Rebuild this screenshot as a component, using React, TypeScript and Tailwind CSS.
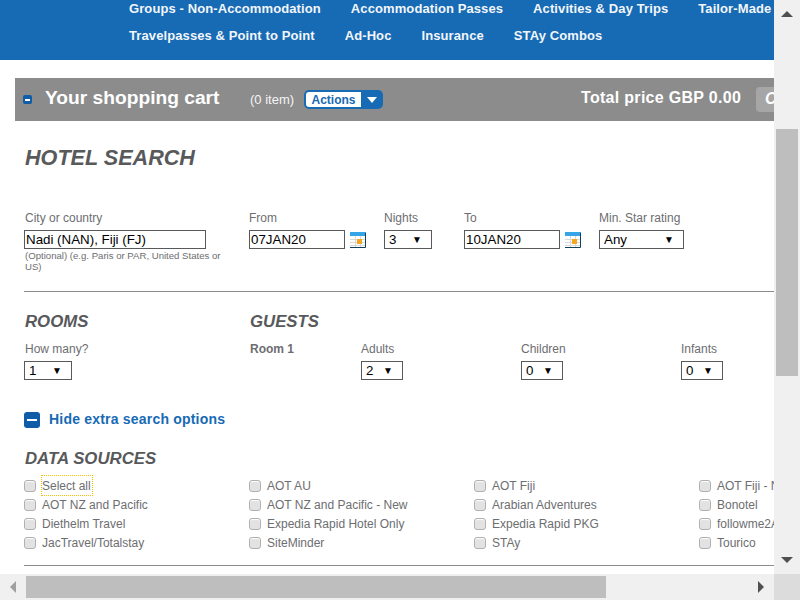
import React from 'react';

const navRows = [
  ['Groups - Non-Accommodation', 'Accommodation Passes', 'Activities & Day Trips', 'Tailor-Made'],
  ['Travelpasses & Point to Point', 'Ad-Hoc', 'Insurance', 'STAy Combos'],
];

const sources = [
  ['Select all', 'AOT AU', 'AOT Fiji', 'AOT Fiji - New'],
  ['AOT NZ and Pacific', 'AOT NZ and Pacific - New', 'Arabian Adventures', 'Bonotel'],
  ['Diethelm Travel', 'Expedia Rapid Hotel Only', 'Expedia Rapid PKG', 'followme2AFRICA'],
  ['JacTravel/Totalstay', 'SiteMinder', 'STAy', 'Tourico'],
];

function CalendarIcon() {
  return (
    <svg width="16" height="16" viewBox="0 0 16 16" className="shrink-0">
      <rect x="0" y="0" width="16" height="16" fill="#fff" />
      <rect x="0" y="0" width="16" height="4" fill="#35a5e8" />
      <path d="M0 7.5H15M0 10.5H15M0 13.5H15M5.5 4V15M10.5 4V15" stroke="#d9d9d9" strokeWidth="1" />
      <rect x="7" y="7" width="5" height="5" fill="#f5a623" />
      <path d="M15.5 1V15.5H0" fill="none" stroke="#123f5c" strokeWidth="1" />
    </svg>
  );
}

function Label({ children }: { children: React.ReactNode }) {
  return <div className="h-[19px] text-xs leading-[14px] text-[#6d6e71]">{children}</div>;
}

function TextBox({ value, width }: { value: string; width: string }) {
  return (
    <div className={`${width} flex h-[19px] items-center border border-[#58595b] pl-[1px] text-[13.33px] text-black`}>
      {value}
    </div>
  );
}

function Select({ value, width }: { value: string; width: string }) {
  return (
    <div className={`${width} flex h-[19px] items-center justify-between border border-[#58595b] pl-[4px] pr-[9px] text-[13.33px] text-black`}>
      <span>{value}</span>
      <span className="text-[10px]">▼</span>
    </div>
  );
}

function SourceCheck({ label, focused }: { label: string; focused?: boolean }) {
  return (
    <div className="flex h-[19px] w-[225px] shrink-0 items-center whitespace-nowrap">
      <span className="ml-[-1px] h-3 w-3 shrink-0 rounded-[3px] border border-[#b0b0b0] bg-[#e2e2e2] shadow-[inset_0_1px_1px_#fff]" />
      <span className={`ml-[6px] flex h-[19px] items-center pr-px text-xs text-[#6d6e71] ${focused ? 'outline-1 outline-dotted outline-[#f5c000]' : ''}`}>
        {label}
      </span>
    </div>
  );
}

export default function App() {
  return (
    <div className="flex h-[600px] w-[800px] flex-col overflow-hidden bg-white font-['Liberation_Sans',Arial,sans-serif]">
      <div className="flex h-[574px]">
        <main className="w-[774px] shrink-0 overflow-hidden">
          <header className="h-[60px] whitespace-nowrap bg-[#176ab4] pl-[129px] text-[13px] font-bold tracking-[0.1px] text-[#f2f6fa]">
            <div className="flex h-[17px] gap-[30px] leading-[17px]">
              {navRows[0].map((item) => (
                <span key={item}>{item}</span>
              ))}
            </div>
            <div className="mt-[10px] flex h-[17px] gap-[30px] leading-[17px]">
              {navRows[1].map((item) => (
                <span key={item}>{item}</span>
              ))}
            </div>
          </header>

          <div className="ml-[15px] mt-[18px] flex h-[43px] items-center whitespace-nowrap bg-[#8c8c8c] text-white">
            <span className="ml-2 flex h-[9px] w-[9px] shrink-0 items-center justify-center rounded-[2px] bg-[#0f5ca8]">
              <span className="h-[2px] w-[5px] bg-white" />
            </span>
            <span className="mb-[2px] ml-[13px] w-[205px] shrink-0 text-[19.2px] font-bold">Your shopping cart</span>
            <span className="w-[54px] shrink-0 text-[13px] text-[#f4f4f4]">(0 item)</span>
            <span className="flex h-[19px] w-[79px] shrink-0 items-center rounded-[5px] bg-[#176ab4] p-[2px]">
              <span className="flex h-[15px] w-[55px] items-center justify-center rounded-l-[3px] bg-white text-xs font-bold text-[#176ab4]">
                Actions
              </span>
              <svg width="10" height="6" viewBox="0 0 10 6" className="ml-[6px]">
                <path d="M0 0H10L5 6Z" fill="#fff" />
              </svg>
            </span>
            <span className="mb-[3px] ml-[198px] w-[175px] shrink-0 text-base font-bold tracking-[0.3px]">Total price GBP 0.00</span>
            <span className="mb-[1px] flex h-[25px] w-[40px] shrink-0 items-center rounded-[4px] bg-[#a6a6a6] pl-[9px] text-base font-bold italic">
              Checkout
            </span>
          </div>

          <div className="pl-6 text-[#58595b]">
            <h1 className="ml-px mt-[24px] h-[26px] text-[21.6px] font-bold italic leading-[26px]">HOTEL SEARCH</h1>

            <div className="mt-[40px] flex h-[75px]">
              <div className="w-[225px]">
                <div className="ml-px">
                  <Label>City or country</Label>
                </div>
                <TextBox value="Nadi (NAN), Fiji (FJ)" width="w-[182px]" />
                <p className="ml-px mt-[1px] w-[200px] text-[9.6px] leading-[11px] text-[#6d6e71]">
                  (Optional) (e.g. Paris or PAR, United States or US)
                </p>
              </div>
              <div className="w-[135px]">
                <Label>From</Label>
                <div className="flex items-center gap-[5px]">
                  <TextBox value="07JAN20" width="w-[96px]" />
                  <CalendarIcon />
                </div>
              </div>
              <div className="w-[80px]">
                <Label>Nights</Label>
                <Select value="3" width="w-[48px]" />
              </div>
              <div className="w-[135px]">
                <Label>To</Label>
                <div className="flex items-center gap-[5px]">
                  <TextBox value="10JAN20" width="w-[96px]" />
                  <CalendarIcon />
                </div>
              </div>
              <div className="w-[100px]">
                <Label>Min. Star rating</Label>
                <Select value="Any" width="w-[85px]" />
              </div>
            </div>

            <hr className="mt-[5px] border-t border-[#8c8c8c]" />

            <div className="mt-[20px] flex">
              <div className="w-[226px]">
                <h2 className="ml-px h-5 text-[16.8px] font-bold italic leading-5">ROOMS</h2>
                <div className="mt-[10px]">
                  <div className="ml-px">
                    <Label>How many?</Label>
                  </div>
                  <Select value="1" width="w-[48px]" />
                </div>
              </div>
              <div>
                <h2 className="h-5 text-[16.8px] font-bold italic leading-5">GUESTS</h2>
                <div className="mt-[10px] flex">
                  <div className="w-[111px] text-xs font-bold leading-[14px] text-[#6d6e71]">Room 1</div>
                  <div className="w-[160px]">
                    <Label>Adults</Label>
                    <Select value="2" width="w-[42px]" />
                  </div>
                  <div className="w-[160px]">
                    <Label>Children</Label>
                    <Select value="0" width="w-[42px]" />
                  </div>
                  <div className="w-[92px]">
                    <Label>Infants</Label>
                    <Select value="0" width="w-[42px]" />
                  </div>
                </div>
              </div>
            </div>

            <div className="mt-[32px] flex h-4 items-center">
              <span className="flex h-4 w-4 items-center justify-center rounded-[3px] bg-[#0f5ca8]">
                <span className="h-[2px] w-[10px] bg-white" />
              </span>
              <span className="mb-[3px] ml-[9px] text-sm font-bold tracking-[0.2px] text-[#176ab4]">Hide extra search options</span>
            </div>

            <h2 className="ml-px mt-[21px] h-5 text-[16.8px] font-bold italic leading-5">DATA SOURCES</h2>

            <div className="mt-[7px] pl-px">
              {sources.map((row, i) => (
                <div key={i} className="flex">
                  {row.map((label) => (
                    <SourceCheck key={label} label={label} focused={label === 'Select all'} />
                  ))}
                </div>
              ))}
            </div>

            <hr className="mt-[13px] border-t border-[#8c8c8c]" />
          </div>
        </main>

        <div className="flex w-[26px] shrink-0 flex-col items-center bg-[#f0f0f0]">
          <svg width="12" height="6" viewBox="0 0 12 6" className="mt-[11px]">
            <path d="M0 6H12L6 0Z" fill="#505050" />
          </svg>
          <div className="mt-[112px] h-[247px] w-[22px] bg-[#bebebe]" />
          <svg width="12" height="6" viewBox="0 0 12 6" className="mt-[181px]">
            <path d="M0 0H12L6 6Z" fill="#505050" />
          </svg>
        </div>
      </div>

      <div className="flex h-[26px]">
        <div className="flex w-[774px] items-center bg-[#f0f0f0]">
          <svg width="6" height="12" viewBox="0 0 6 12" className="ml-[10px]">
            <path d="M6 0V12L0 6Z" fill="#a0a0a0" />
          </svg>
          <div className="ml-[10px] h-[22px] w-[580px] bg-[#bebebe]" />
          <svg width="6" height="12" viewBox="0 0 6 12" className="ml-[152px]">
            <path d="M0 0V12L6 6Z" fill="#505050" />
          </svg>
        </div>
        <div className="w-[26px] bg-[#dcdcdc]" />
      </div>
    </div>
  );
}
